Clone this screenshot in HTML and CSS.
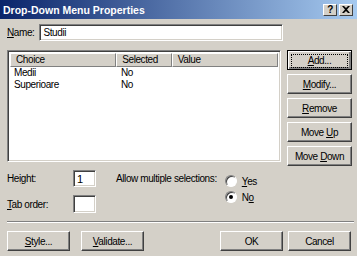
FILE: index.html
```html
<!DOCTYPE html>
<html lang="en">
<head>
    <meta charset="UTF-8">
    <title>Drop-Down Menu Properties</title>
    <link rel="stylesheet" href="styles.css">
</head>
<body>
    <div class="window">
        <div class="titlebar">
            <span class="title">Drop-Down Menu Properties</span>
            <div class="caption-buttons">
                <span class="cap-btn">?</span>
                <span class="cap-btn close">
                    <svg width="8" height="7" viewBox="0 0 8 7"><path d="M0 0h2l2 2 2-2h2L5 3.5 8 7H6L4 5 2 7H0l3-3.5z" fill="#000"/></svg>
                </span>
            </div>
        </div>

        <div class="content">
            <div class="name-row">
                <label class="lbl"><u>N</u>ame:</label>
                <div class="field name-field">Studii</div>
            </div>

            <div class="main">
                <div class="list field">
                    <div class="list-head">
                        <span class="col col-choice">Choice</span>
                        <span class="col col-selected">Selected</span>
                        <span class="col col-value">Value</span>
                    </div>
                    <div class="list-row"><span class="cell-choice">Medii</span><span>No</span></div>
                    <div class="list-row"><span class="cell-choice">Superioare</span><span>No</span></div>
                </div>

                <div class="side-buttons">
                    <button class="btn default"><span class="focus"><u>A</u>dd...</span></button>
                    <button class="btn"><u>M</u>odify...</button>
                    <button class="btn"><u>R</u>emove</button>
                    <button class="btn">Move <u>U</u>p</button>
                    <button class="btn">Move <u>D</u>own</button>
                </div>
            </div>

            <div class="options">
                <div class="small-fields">
                    <div class="small-row">
                        <label class="lbl">Hei<u>g</u>ht:</label>
                        <div class="field small-field">1</div>
                    </div>
                    <div class="small-row">
                        <label class="lbl"><u>T</u>ab order:</label>
                        <div class="field small-field tall"></div>
                    </div>
                </div>
                <div class="allow">Allow multiple selections:</div>
                <div class="radios">
                    <div class="radio-row"><span class="radio"></span><span><u>Y</u>es</span></div>
                    <div class="radio-row"><span class="radio checked"></span><span>N<u>o</u></span></div>
                </div>
            </div>

            <div class="separator"></div>

            <div class="footer">
                <div class="footer-left">
                    <button class="btn wide"><u>S</u>tyle...</button>
                    <button class="btn wide"><u>V</u>alidate...</button>
                </div>
                <div class="footer-right">
                    <button class="btn wide">OK</button>
                    <button class="btn wide">Cancel</button>
                </div>
            </div>
        </div>
    </div>
</body>
</html>
```

FILE: styles.css
```css
body {
    margin: 0;
    padding: 0;
    background-color: #d4d0c8;
    font-family: 'Liberation Sans', Arial, sans-serif;
    font-size: 10px;
    letter-spacing: -0.4px;
    color: #000;
}

.window {
    width: 357px;
    height: 256px;
    background-color: #d4d0c8;
    overflow: hidden;
}

.titlebar {
    height: 19px;
    display: flex;
    align-items: center;
    justify-content: space-between;
    padding: 0 3px 0 3px;
    background: linear-gradient(to right, #0a246a, #a6caf0);
}

.title {
    color: #fff;
    font-weight: bold;
    font-size: 10.5px;
    letter-spacing: 0;
}

.caption-buttons {
    display: flex;
    gap: 2px;
    margin-right: 1px;
}

.cap-btn {
    width: 14px;
    height: 12px;
    box-sizing: border-box;
    display: flex;
    align-items: center;
    justify-content: center;
    background-color: #d4d0c8;
    border: 1px solid;
    border-color: #fff #404040 #404040 #fff;
    font-weight: bold;
    font-size: 10px;
}

.content {
    padding: 0 5px 0 7px;
}

/* sunken field */
.field {
    background-color: #fff;
    box-sizing: border-box;
    border: 1px solid;
    border-color: #808080 #fff #fff #808080;
    box-shadow: inset 1px 1px #404040, inset -1px -1px #d4d0c8;
}

.name-row {
    display: flex;
    align-items: center;
    margin-top: 5px;
    height: 17px;
}

.name-field {
    width: 244px;
    height: 17px;
    margin-left: 5px;
    padding: 2px 3px;
    line-height: 12px;
}

.main {
    display: flex;
    margin-top: 9px;
    gap: 6px;
}

.list {
    width: 274px;
    height: 112px;
    padding: 2px;
}

.list-head {
    display: flex;
    height: 14px;
}

.col {
    box-sizing: border-box;
    height: 14px;
    line-height: 12px;
    padding-left: 5px;
    background-color: #d4d0c8;
    border: 1px solid;
    border-color: #fff #808080 #808080 #fff;
}

.col-choice {
    width: 107px;
}

.col-selected {
    width: 56px;
}

.col-value {
    width: 107px;
}

.list-row {
    display: flex;
    height: 12px;
    line-height: 12px;
    padding-left: 4px;
}

.cell-choice {
    width: 107px;
}

.side-buttons {
    display: flex;
    flex-direction: column;
    gap: 4px;
}

.btn {
    width: 65px;
    height: 20px;
    padding: 0;
    box-sizing: border-box;
    background-color: #d4d0c8;
    font-family: inherit;
    font-size: 10px;
    letter-spacing: -0.4px;
    color: #000;
    border: 1px solid;
    border-color: #fff #404040 #404040 #fff;
    box-shadow: inset -1px -1px #808080;
}

.btn.default {
    border: 1px solid #000;
    box-shadow: inset 1px 1px #fff, inset -2px -2px #808080;
    padding: 3px;
}

.btn .focus {
    display: block;
    height: 12px;
    line-height: 11px;
    border: 1px dotted #000;
}

.options {
    display: flex;
    margin-top: 4px;
    height: 44px;
}

.small-fields {
    display: flex;
    flex-direction: column;
    gap: 8px;
}

.small-row {
    display: flex;
    align-items: center;
    width: 89px;
    justify-content: space-between;
}

.small-field {
    width: 23px;
    height: 17px;
    padding: 1px 3px;
    line-height: 14px;
    font-size: 11px;
}

.small-field.tall {
    height: 18px;
}

.allow {
    margin-left: 20px;
    margin-top: 3px;
}

.radios {
    margin-left: 8px;
    margin-top: 3px;
}

.radio-row {
    display: flex;
    align-items: center;
    gap: 5px;
    height: 16px;
}

.radio {
    width: 12px;
    height: 12px;
    box-sizing: border-box;
    border-radius: 50%;
    background-color: #fff;
    border: 1px solid;
    border-color: #808080 #fff #fff #808080;
    box-shadow: inset 1px 1px #404040;
    position: relative;
}

.radio.checked::after {
    content: "";
    position: absolute;
    left: 3px;
    top: 3px;
    width: 4px;
    height: 4px;
    border-radius: 50%;
    background-color: #000;
}

.separator {
    margin-top: 7px;
    margin-right: -2px;
    border-top: 1px solid #808080;
    border-bottom: 1px solid #fff;
}

.footer {
    display: flex;
    justify-content: space-between;
    margin-top: 8px;
}

.footer-left, .footer-right {
    display: flex;
    gap: 11px;
}

.footer-right {
    gap: 5px;
    margin-right: 1px;
}

.btn.wide {
    width: 63px;
}
```
